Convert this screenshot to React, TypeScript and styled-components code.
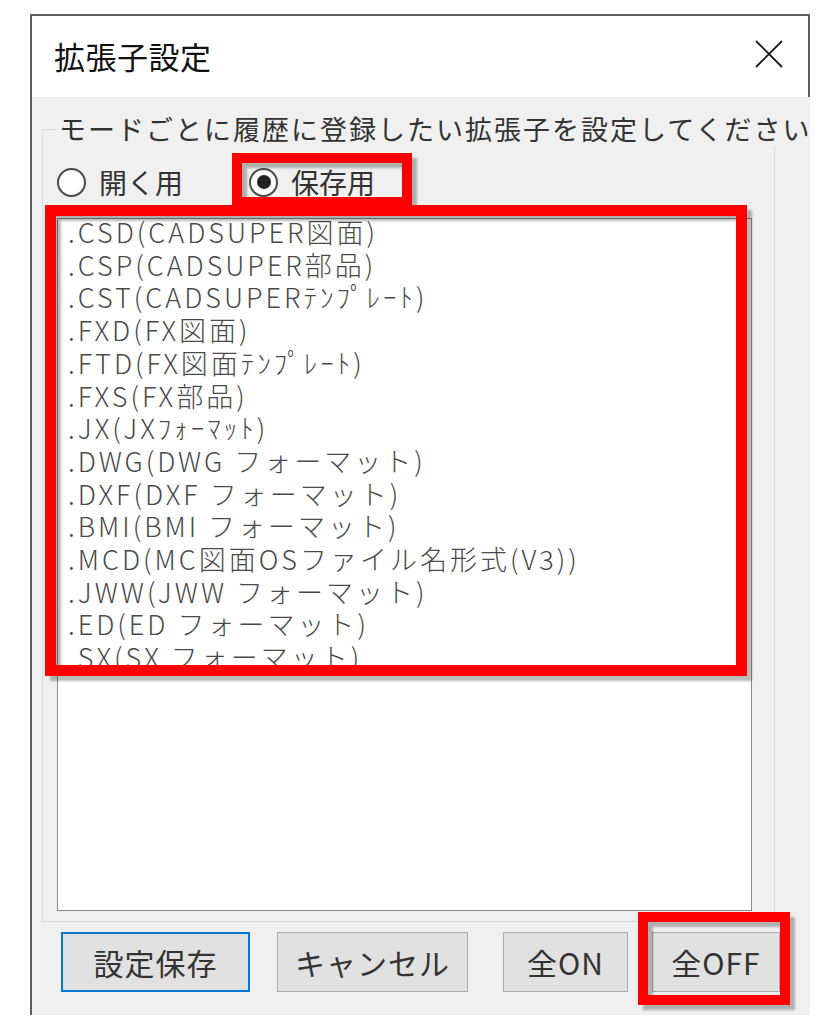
import styled, { createGlobalStyle } from "styled-components"

const GlobalStyle = createGlobalStyle`
  html, body {
    margin: 0;
    padding: 0;
    background: #ffffff;
  }
  body {
    font-family: "Noto Sans CJK JP", "Liberation Sans", sans-serif;
  }
`

const Page = styled.div`
  position: relative;
  width: 830px;
  height: 1024px;
  padding: 14px 0 0 30px;
  box-sizing: border-box;
  overflow: hidden;
`

const Window = styled.div`
  width: 780px;
  border-left: 2px solid #5f5f5f;
  border-top: 2px solid #5f5f5f;
  box-sizing: border-box;
`

const TitleBar = styled.div`
  height: 81px;
  background: #ffffff;
  border-right: 2px solid #5f5f5f;
  display: flex;
  align-items: center;
  justify-content: space-between;
  padding: 0 25px 0 22px;
`

const Title = styled.span`
  font-size: 31px;
  color: #111;
  letter-spacing: 0.5px;
  padding-bottom: 2px;
`

const CloseIcon = styled.svg`
  width: 28px;
  height: 28px;
  margin-top: -6px;
`

const Body = styled.div`
  height: 918px;
  background: #f0f0f0;
  overflow: hidden;
  display: flex;
  flex-direction: column;
`

const GroupBox = styled.fieldset`
  margin: 15px 0 0 10px;
  width: 733px;
  box-sizing: border-box;
  padding: 0 0 10px 0;
  border: 1px solid #dcdcdc;
  min-width: 0;
`

const Caption = styled.legend`
  margin-left: 14px;
  padding: 0 2px;
  font-size: 27px;
  line-height: 34px;
  letter-spacing: 2px;
  color: #333;
  white-space: nowrap;
`

const RadioRow = styled.div`
  display: flex;
  align-items: center;
  height: 36px;
  margin-top: 18px;
  padding-left: 14px;
`

const RadioLabel = styled.label<{ $width: number }>`
  display: flex;
  align-items: center;
  width: ${({ $width }) => $width}px;
  font-size: 28px;
  color: #333;
  gap: 13px;
`

const RadioCircle = styled.span<{ $checked?: boolean }>`
  width: 29px;
  height: 29px;
  box-sizing: border-box;
  border-radius: 50%;
  border: 2px solid #4a4a4a;
  background: #ffffff;
  display: flex;
  align-items: center;
  justify-content: center;

  &::after {
    content: "";
    width: 14px;
    height: 14px;
    border-radius: 50%;
    background: ${({ $checked }) => ($checked ? "#222" : "transparent")};
  }
`

const ListBox = styled.ul`
  list-style: none;
  margin: 18px 0 0 14px;
  padding: 0 0 0 10px;
  width: 695px;
  height: 693px;
  box-sizing: border-box;
  background: #ffffff;
  border: 1px solid #8c8c8c;
  overflow: hidden;
`

const ListItem = styled.li`
  font-size: 27px;
  font-weight: 300;
  line-height: 32.7px;
  letter-spacing: 3px;
  color: #4a4a4a;
  white-space: nowrap;

  &:first-child {
    margin-top: -3px;
  }
`

const ButtonRow = styled.div`
  display: flex;
  align-items: center;
  margin-top: 10px;
  padding-left: 29px;
`

const Button = styled.button<{ $width: number; $gap: number; $default?: boolean }>`
  width: ${({ $width }) => $width}px;
  height: 60px;
  margin-left: ${({ $gap }) => $gap}px;
  box-sizing: border-box;
  background: #e1e1e1;
  border: ${({ $default }) => ($default ? "2px solid #0078d7" : "1px solid #adadad")};
  font-family: "Noto Sans CJK JP", "Liberation Sans", sans-serif;
  font-size: 30px;
  color: #333;
  letter-spacing: 1px;
  padding: 0;
`

const Highlight = styled.div<{ $x: number; $y: number; $w: number; $h: number; $t: number }>`
  position: absolute;
  left: ${({ $x }) => $x}px;
  top: ${({ $y }) => $y}px;
  width: ${({ $w }) => $w}px;
  height: ${({ $h }) => $h}px;
  box-sizing: border-box;
  border: ${({ $t }) => $t}px solid #ff0000;
  filter: drop-shadow(5px 5px 1px rgba(0, 0, 0, 0.27));
  pointer-events: none;
`

const extensions = [
    ".CSD(CADSUPER図面)",
    ".CSP(CADSUPER部品)",
    ".CST(CADSUPERﾃﾝﾌﾟﾚｰﾄ)",
    ".FXD(FX図面)",
    ".FTD(FX図面ﾃﾝﾌﾟﾚｰﾄ)",
    ".FXS(FX部品)",
    ".JX(JXﾌｫｰﾏｯﾄ)",
    ".DWG(DWG フォーマット)",
    ".DXF(DXF フォーマット)",
    ".BMI(BMI フォーマット)",
    ".MCD(MC図面OSファイル名形式(V3))",
    ".JWW(JWW フォーマット)",
    ".ED(ED フォーマット)",
    ".SX(SX フォーマット)",
]

export default function App() {
    return (
        <>
            <GlobalStyle />
            <Page>
                <Window>
                    <TitleBar>
                        <Title>拡張子設定</Title>
                        <CloseIcon viewBox="0 0 28 28">
                            <path d="M1 1 L27 27 M27 1 L1 27" stroke="#1a1a1a" strokeWidth="1.8" fill="none" />
                        </CloseIcon>
                    </TitleBar>

                    <Body>
                        <GroupBox>
                            <Caption>モードごとに履歴に登録したい拡張子を設定してください</Caption>

                            <RadioRow>
                                <RadioLabel $width={192}>
                                    <RadioCircle />
                                    開く用
                                </RadioLabel>
                                <RadioLabel $width={160}>
                                    <RadioCircle $checked />
                                    保存用
                                </RadioLabel>
                            </RadioRow>

                            <ListBox>
                                {extensions.map((ext) => (
                                    <ListItem key={ext}>{ext}</ListItem>
                                ))}
                            </ListBox>
                        </GroupBox>

                        <ButtonRow>
                            <Button $width={189} $gap={0} $default>設定保存</Button>
                            <Button $width={191} $gap={27}>キャンセル</Button>
                            <Button $width={125} $gap={35}>全ON</Button>
                            <Button $width={128} $gap={24}>全OFF</Button>
                        </ButtonRow>
                    </Body>
                </Window>

                <Highlight $x={232} $y={153} $w={180} $h={54} $t={10} />
                <Highlight $x={45} $y={205} $w={702} $h={471} $t={11} />
                <Highlight $x={638} $y={912} $w={152} $h={93} $t={10} />
            </Page>
        </>
    )
}
